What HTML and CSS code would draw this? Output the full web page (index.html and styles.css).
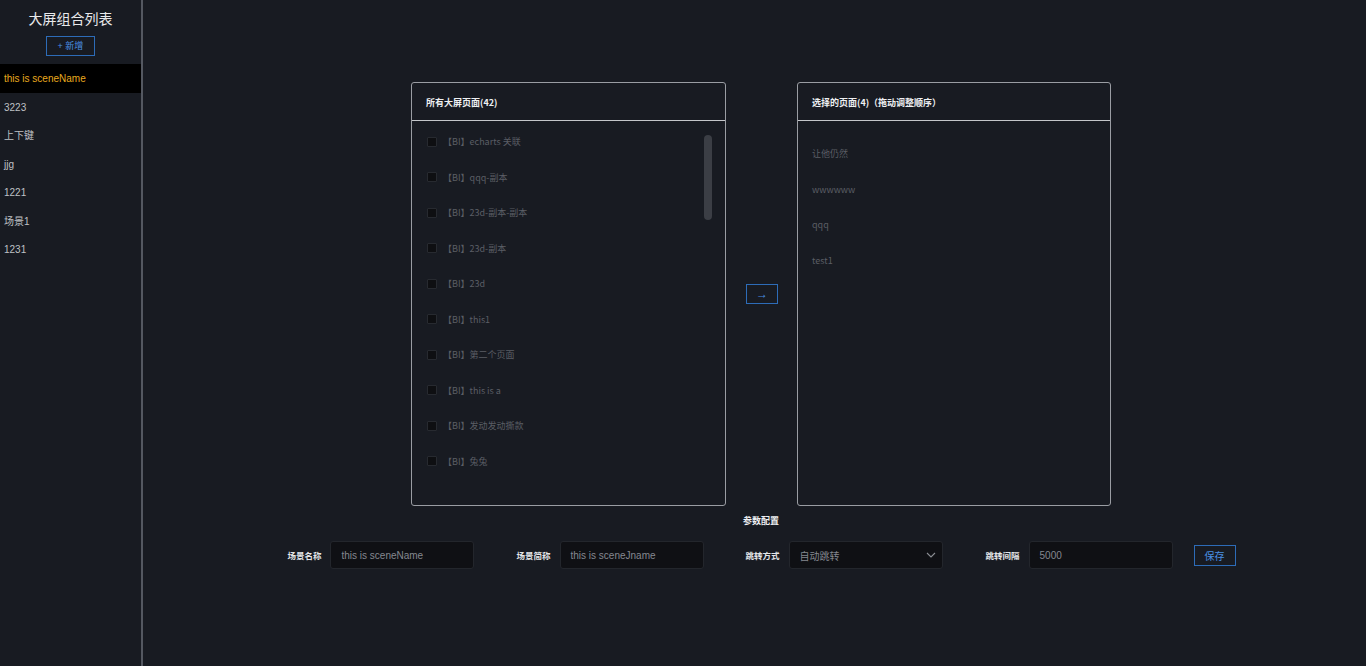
FILE: index.html
```html
<!DOCTYPE html>
<html lang="zh">
<head>
<meta charset="utf-8">
<title>大屏组合列表</title>
<link rel="stylesheet" href="styles.css">
</head>
<body>
<aside class="sidebar">
  <h1 class="side-title">大屏组合列表</h1>
  <div class="add-wrap"><button class="btn-add">+ 新增</button></div>
  <ul class="scene-list">
    <li class="scene active">this is sceneName</li>
    <li class="scene">3223</li>
    <li class="scene">上下键</li>
    <li class="scene">jjg</li>
    <li class="scene">1221</li>
    <li class="scene">场景1</li>
    <li class="scene">1231</li>
  </ul>
</aside>
<main class="main">
  <section class="transfer">
    <div class="panel">
      <div class="panel-head">所有大屏页面(42)</div>
      <div class="panel-body">
        <ul class="check-list">
          <li class="check-row"><span class="cb"></span><span class="lbl">【BI】echarts 关联</span></li>
          <li class="check-row"><span class="cb"></span><span class="lbl">【BI】qqq-副本</span></li>
          <li class="check-row"><span class="cb"></span><span class="lbl">【BI】23d-副本-副本</span></li>
          <li class="check-row"><span class="cb"></span><span class="lbl">【BI】23d-副本</span></li>
          <li class="check-row"><span class="cb"></span><span class="lbl">【BI】23d</span></li>
          <li class="check-row"><span class="cb"></span><span class="lbl">【BI】this1</span></li>
          <li class="check-row"><span class="cb"></span><span class="lbl">【BI】第二个页面</span></li>
          <li class="check-row"><span class="cb"></span><span class="lbl">【BI】this is a</span></li>
          <li class="check-row"><span class="cb"></span><span class="lbl">【BI】发动发动撕款</span></li>
          <li class="check-row"><span class="cb"></span><span class="lbl">【BI】兔兔</span></li>
        </ul>
        <div class="scroll-thumb"></div>
      </div>
    </div>
    <button class="btn-move">&#8594;</button>
    <div class="panel panel-right">
      <div class="panel-head">选择的页面(4)（拖动调整顺序）</div>
      <div class="panel-body">
        <ul class="sel-list">
          <li class="sel-row">让他仍然</li>
          <li class="sel-row">wwwwww</li>
          <li class="sel-row">qqq</li>
          <li class="sel-row">test1</li>
        </ul>
      </div>
    </div>
  </section>
  <h2 class="cfg-title">参数配置</h2>
  <form class="cfg-row">
    <label class="field f1"><span class="f-lbl">场景名称</span><span class="input">this is sceneName</span></label>
    <label class="field f2"><span class="f-lbl">场景简称</span><span class="input">this is sceneJname</span></label>
    <label class="field f3"><span class="f-lbl">跳转方式</span><span class="input select"><span>自动跳转</span>
      <svg class="chev" width="10" height="6" viewBox="0 0 10 6"><path d="M1 1 L5 5 L9 1" fill="none" stroke="#8a8d93" stroke-width="1.1"/></svg></span></label>
    <label class="field f4"><span class="f-lbl">跳转间隔</span><span class="input">5000</span></label>
    <button type="button" class="btn-save">保存</button>
  </form>
</main>
</body>
</html>
```
FILE: styles.css
```css
* { box-sizing: border-box; }
html, body { margin: 0; padding: 0; }
body {
  display: flex;
  height: 666px;
  background: #181b22;
  font-family: "Liberation Sans", "Noto Sans CJK SC", sans-serif;
  color: #c9cbcf;
  overflow: hidden;
}
ul { list-style: none; margin: 0; padding: 0; }
button { font-family: inherit; cursor: pointer; }

.sidebar {
  width: 143px;
  flex: none;
  border-right: 2px solid #545861;
}
.side-title {
  margin: 0;
  padding-top: 10px;
  height: 34px;
  text-align: center;
  font-size: 14px;
  font-weight: normal;
  line-height: 18px;
  color: #e8e9eb;
}
.add-wrap { display: flex; justify-content: center; margin-top: 2px; }
.btn-add {
  width: 49px;
  height: 20px;
  padding: 0;
  background: transparent;
  border: 1px solid #2d6cb8;
  color: #4a90e2;
  font-size: 9px;
  line-height: 18px;
}
.scene-list { margin-top: 8px; }
.scene {
  height: 28.5px;
  line-height: 30px;
  padding-left: 4px;
  font-size: 10px;
  color: #bfc1c5;
}
.scene.active { background: #000; color: #e8aa1e; }

.main {
  flex: 1;
  padding-top: 82px;
  padding-left: 13px;
  display: flex;
  flex-direction: column;
  align-items: center;
}
.transfer {
  display: flex;
  align-items: center;
  gap: 20px;
}
.panel {
  width: 315px;
  height: 424px;
  border: 1px solid #9a9da3;
  border-radius: 3px;
  display: flex;
  flex-direction: column;
}
.panel-right { width: 314px; margin-left: -1px; }
.panel-head {
  height: 38px;
  flex: none;
  border-bottom: 1px solid #c4c6ca;
  padding-left: 14px;
  padding-top: 1px;
  display: flex;
  align-items: center;
  font-size: 9px;
  font-weight: bold;
  color: #eef0f2;
  font-family: "Noto Sans CJK SC", "Liberation Sans", sans-serif;
}
.panel-body {
  flex: 1;
  position: relative;
  overflow: hidden;
}
.check-list { padding-top: 3px; }
.check-row {
  height: 35.5px;
  display: flex;
  align-items: center;
  padding-left: 15px;
}
.cb {
  width: 10px;
  height: 10px;
  background: #0e0f12;
  border: 1px solid #272a30;
  border-radius: 1px;
  margin-right: 6px;
  flex: none;
}
.lbl {
  font-size: 9px;
  color: #5b5e65;
  font-family: "Noto Sans CJK SC", "Liberation Sans", sans-serif;
}
.scroll-thumb {
  position: absolute;
  left: 292px;
  top: 14px;
  width: 8px;
  height: 85px;
  border-radius: 4px;
  background: #3b3e45;
}
.sel-list { padding-top: 14px; }
.sel-row {
  height: 35.7px;
  line-height: 37px;
  padding-left: 14px;
  font-size: 9px;
  color: #5b5e65;
  font-family: "Noto Sans CJK SC", "Liberation Sans", sans-serif;
}
.btn-move {
  width: 32px;
  height: 20px;
  padding: 0;
  background: transparent;
  border: 1px solid #2d6cb8;
  color: #4a90e2;
  font-size: 12px;
  line-height: 16px;
}

.cfg-title {
  margin: 7px 0 0;
  font-size: 9px;
  line-height: 16px;
  font-weight: bold;
  color: #eef0f2;
  font-family: "Noto Sans CJK SC", "Liberation Sans", sans-serif;
}
.cfg-row {
  margin: 12px 0 0 1px;
  display: flex;
  align-items: center;
}
.field {
  display: flex;
  align-items: center;
  margin-right: 43px;
}
.f1 { margin-right: 42px; }
.f2 { margin-right: 42px; }
.f4 { margin-right: 21px; }
.f-lbl {
  font-size: 8.5px;
  font-weight: bold;
  color: #e4e6e9;
  margin-right: 9px;
  font-family: "Noto Sans CJK SC", "Liberation Sans", sans-serif;
}
.input {
  width: 144px;
  height: 28px;
  background: #0f1014;
  border: 1px solid #23262c;
  border-radius: 3px;
  padding-left: 10px;
  display: flex;
  align-items: center;
  font-size: 10px;
  color: #858890;
}
.select {
  width: 154px;
  justify-content: space-between;
  padding-right: 6px;
  font-family: "Noto Sans CJK SC", "Liberation Sans", sans-serif;
}
.chev { flex: none; }
.btn-save {
  width: 42px;
  height: 21px;
  padding: 0;
  background: transparent;
  border: 1px solid #2d6cb8;
  color: #4a90e2;
  font-size: 10px;
  font-family: "Noto Sans CJK SC", "Liberation Sans", sans-serif;
}
```
